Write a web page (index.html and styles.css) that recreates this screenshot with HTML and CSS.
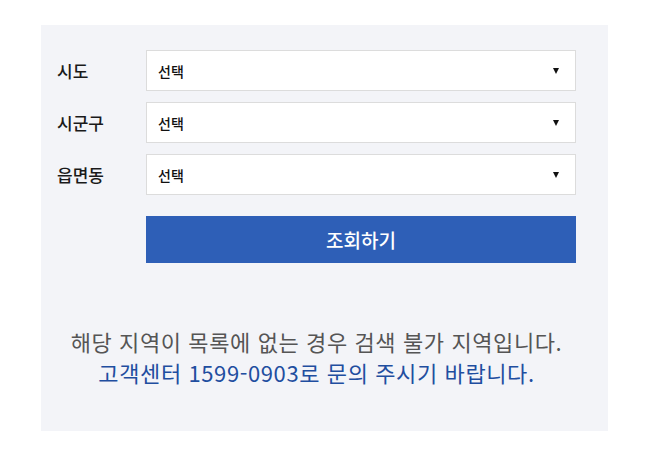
FILE: index.html
```html
<!DOCTYPE html>
<html lang="ko">
<head>
<meta charset="utf-8">
<link rel="stylesheet" href="styles.css">
</head>
<body>
<div class="panel">
  <div class="row">
    <div class="label">시도</div>
    <div class="select"><span class="value">선택</span><span class="arrow"></span></div>
  </div>
  <div class="row">
    <div class="label">시군구</div>
    <div class="select"><span class="value">선택</span><span class="arrow"></span></div>
  </div>
  <div class="row">
    <div class="label">읍면동</div>
    <div class="select"><span class="value">선택</span><span class="arrow"></span></div>
  </div>
  <div class="row">
    <div class="label"></div>
    <button class="btn">조회하기</button>
  </div>
  <div class="notice">
    <p class="line1">해당 지역이 목록에 없는 경우 검색 불가 지역입니다.</p>
    <p class="line2">고객센터 1599-0903로 문의 주시기 바랍니다.</p>
  </div>
</div>
</body>
</html>
```
FILE: styles.css
```css
html, body {
  margin: 0;
  padding: 0;
  background: #ffffff;
}
body {
  font-family: "Noto Sans CJK KR", "Noto Sans", sans-serif;
}
.panel {
  margin: 25px 0 0 41px;
  width: 567px;
  height: 406px;
  box-sizing: border-box;
  padding: 25px 32px 0 16px;
  background: #f3f4f8;
  display: flex;
  flex-direction: column;
  gap: 11px;
}
.row {
  display: flex;
  align-items: center;
}
.label {
  width: 89px;
  flex: none;
  font-size: 17px;
  font-weight: 500;
  color: #1a1a1a;
}
.select {
  width: 430px;
  height: 41px;
  box-sizing: border-box;
  border: 1px solid #dcdcdc;
  background: #fff;
  display: flex;
  align-items: center;
  justify-content: space-between;
  padding: 0 16px 0 11px;
}
.value {
  font-size: 14px;
  font-weight: 500;
  color: #111;
}
.arrow {
  width: 0;
  height: 0;
  border-left: 3.5px solid transparent;
  border-right: 3.5px solid transparent;
  border-top: 6px solid #111;
}
.btn {
  margin-top: 10px;
  width: 430px;
  height: 47px;
  border: none;
  background: #2e5fb7;
  color: #fff;
  font-family: inherit;
  font-size: 19px;
  font-weight: 500;
  padding: 0;
}
.notice {
  margin-top: 52px;
  text-align: center;
}
.notice p {
  margin: 0;
  font-size: 22px;
  line-height: 31px;
  letter-spacing: 0.6px;
}
.line1 {
  color: #555;
}
.line2 {
  color: #1f4ea0;
}
```
